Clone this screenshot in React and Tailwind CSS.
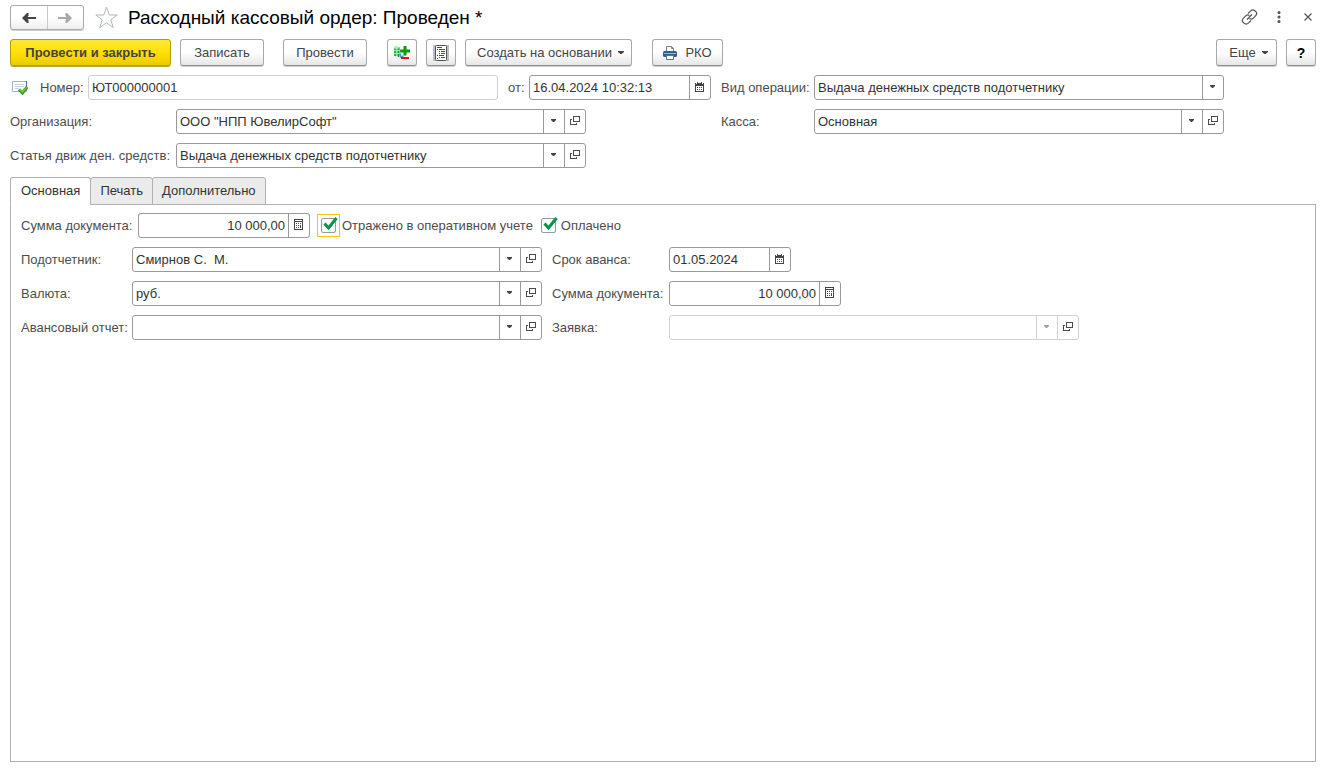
import { useState } from 'react';
import clsx from 'clsx';

const BUTTON = 'h-[27px] shrink-0 flex items-center justify-center rounded-[3px] border border-[#a9a9a9] border-b-[#8f8f8f] bg-linear-to-b from-white from-50% to-[#e6e6e6] shadow-[0_1px_0_#d0d0d0] text-[#444444] whitespace-nowrap';

const TABS = ['Основная', 'Печать', 'Дополнительно'];

function Caret({ wide }) {
  return (
    <svg className="shrink-0" width={wide ? 6 : 5} height="3" viewBox="0 0 5 3" preserveAspectRatio="none" fill="currentColor">
      <path d="M0 0h5v1L3 3H2L0 1z" />
    </svg>
  );
}

function OpenIcon() {
  return (
    <svg width="10" height="9" viewBox="0 0 10 9" fill="#4a4a4a" shapeRendering="crispEdges">
      <path fillRule="evenodd" d="M3 0h7v6H3zM4 1v4h5V1z" />
      <path d="M0 3h2v1H1v4h5V7h1v2H0z" />
    </svg>
  );
}

function CalendarIcon() {
  return (
    <svg width="9" height="10" viewBox="0 0 9 10" fill="#444444" shapeRendering="crispEdges">
      <path d="M0 1h9v3H0zM2 0h1v1H2zM6 0h1v1H6zM0 4h1v6H0zM8 4h1v6H8zM1 9h7v1H1zM2 5h1v1H2zM4 5h1v1H4zM6 5h1v1H6zM2 7h1v1H2zM4 7h1v1H4zM6 7h1v1H6z" />
      <path d="M1 1h1v1H1zM7 1h1v1H7z" fill="#ffffff" />
    </svg>
  );
}

function CalculatorIcon() {
  return (
    <svg width="9" height="11" viewBox="0 0 9 11" fill="#444444" shapeRendering="crispEdges">
      <path d="M0 0h9v1H0zM0 2h9v1H0zM0 1h1v10H0zM8 1h1v10H8zM1 10h7v1H1zM2 4h1v1H2zM4 4h1v1H4zM6 4h1v1H6zM2 6h1v1H2zM4 6h1v1H4zM6 6h1v3H6zM2 8h1v1H2zM4 8h1v1H4z" />
    </svg>
  );
}

function ArrowIcon({ flip }) {
  return (
    <svg className={flip ? 'rotate-180' : ''} width="14" height="10" viewBox="0 0 14 10" fill="currentColor">
      <path d="M0 5L5 0h1.500v3L5.500 4H14v2H5.500l1 1v3H5z" />
    </svg>
  );
}

function MovementsIcon() {
  return (
    <svg width="16" height="16" viewBox="0 0 16 16">
      <path d="M0 2.500h6v8.500H0z" fill="#7be08c" />
      <path d="M1 3v8M4.500 2v10" stroke="#17a03a" strokeWidth="1.500" />
      <ellipse cx="2.500" cy="2.500" rx="2.500" ry="1.500" fill="#a5efb0" />
      <path d="M0 5.500h6M0 8.500h6" stroke="#c9f5cf" strokeWidth=".7" />
      <path d="M6.500 8.500v3.500l3-1" fill="none" stroke="#4a93d0" strokeWidth="1.500" />
      <path d="M6 6h10M11 1v9.500" stroke="#0a9a0a" strokeWidth="3" />
      <path d="M7 13h8" stroke="#ee1111" strokeWidth="2" />
    </svg>
  );
}

function ReportIcon() {
  return (
    <svg width="16" height="16" viewBox="0 0 16 16">
      <path d="M0 0h16v16H0z" fill="#bdbdbd" />
      <rect x="2.500" y=".5" width="11" height="15" rx="1" fill="#fff" stroke="#555555" />
      <path d="M4 2h5v1H4zM6 4h6v1H6zM8 6h4v1H8zM8 8h4v1H8zM6 10h5v1H6zM8 12h4v1H8zM4 4h1v1H4zM6 6h1v1H6zM6 8h1v1H6zM4 10h1v1H4zM6 12h1v1H6zM4 13h1v1H4z" fill="#165a80" />
    </svg>
  );
}

function PrinterIcon() {
  return (
    <svg width="14" height="14" viewBox="0 0 14 14">
      <path d="M3.500 5V.5h5l2 2V5" fill="#fff" stroke="#6c8499" />
      <path d="M8.500 .5v2h2" fill="none" stroke="#6c8499" />
      <rect y="5" width="14" height="6" rx="1.500" fill="#2f618c" />
      <path d="M1 7.500h12" stroke="#9dbad2" />
      <path d="M3.500 9.500h7v4h-7z" fill="#fff" stroke="#56738c" />
    </svg>
  );
}

function PostedIcon() {
  return (
    <svg width="16" height="14" viewBox="0 0 16 14">
      <path d="M.5 .5h14v10H.5z" fill="#fff" stroke="#9fb4c6" />
      <path d="M14.500 0v7" stroke="#45698a" />
      <path d="M3 3.500h9M3 5.500h9M3 7.500h4" stroke="#c6d1db" />
      <path d="M7 8.500l3.500 3.500L15 6" fill="none" stroke="#2c8f1d" strokeWidth="3" />
      <path d="M7.500 8.500l3 2.800L14.500 6" fill="none" stroke="#62cc3c" strokeWidth="1.500" />
    </svg>
  );
}

function Frame({ muted, className, children }) {
  return (
    <div className={clsx('flex h-[25px] shrink-0 overflow-hidden rounded-[3px] border bg-white', muted ? 'border-[#d0d0d0]' : 'border-[#999999]', className)}>
      {children}
    </div>
  );
}

function IconButton({ label, muted, children }) {
  return (
    <button type="button" aria-label={label} className={clsx('flex w-[21px] shrink-0 items-center justify-center border-l pr-px pb-0.5', muted ? 'border-[#d0d0d0]' : 'border-[#999999]')}>
      {children}
    </button>
  );
}

function TextField({ id, value, className, right, muted, icon, iconLabel }) {
  return (
    <Frame muted={muted} className={className}>
      <input id={id} defaultValue={value} readOnly={muted} className={clsx('min-w-0 flex-1 px-[3px] text-[#333333] outline-none', right && 'text-right')} />
      {icon && <IconButton label={iconLabel}>{icon}</IconButton>}
    </Frame>
  );
}

function SelectField({ id, value, muted, open = true }) {
  return (
    <Frame muted={muted} className="w-[410px]">
      <div className="relative min-w-0 flex-1">
        <select id={id} defaultValue={value} disabled={muted} className="h-full w-full appearance-none bg-transparent pr-6 pl-[3px] whitespace-pre text-[#333333] outline-none">
          <option value={value}>{value}</option>
        </select>
        <span className={clsx('pointer-events-none absolute inset-y-0 right-0 flex w-[21px] items-center justify-center border-l pr-px pb-0.5', muted ? 'border-[#d0d0d0] text-[#a0a0a0]' : 'border-[#999999] text-[#444444]')}>
          <Caret />
        </span>
      </div>
      {open && <IconButton label="Открыть" muted={muted}><OpenIcon /></IconButton>}
    </Frame>
  );
}

function Label({ htmlFor, className, children }) {
  return (
    <label htmlFor={htmlFor} className={clsx('shrink-0 whitespace-nowrap', className)}>{children}</label>
  );
}

function CheckField({ id, focused, children }) {
  return (
    <div className={clsx('flex items-center', focused ? 'gap-0.5' : 'gap-[5px]')}>
      <span className={clsx('relative flex', focused && 'border border-[#f5c518] p-[3px]')}>
        <input id={id} type="checkbox" defaultChecked className="peer size-[15px] appearance-none rounded-[2px] border border-[#999999] bg-white outline-none" />
        <svg className={clsx('pointer-events-none absolute hidden peer-checked:block', focused ? 'top-0.5 left-[5px]' : '-top-px left-0.5')} width="15" height="14" viewBox="0 0 15 14" fill="none" stroke="#009646" strokeWidth="3">
          <path d="M1.500 6.500l4 4.500L13.500 1" />
        </svg>
      </span>
      <label htmlFor={id} className="whitespace-nowrap">{children}</label>
    </div>
  );
}

export default function App() {
  const [tab, setTab] = useState('Основная');

  return (
    <div className="flex min-h-screen flex-col bg-white px-2.5 pt-[5px] pb-1.5 font-['Liberation_Sans',Arial,sans-serif] text-[13px] leading-4 text-[#4d4d4d]">
      {/* Window title */}
      <header className="flex h-[25px] items-center">
        <div className="flex h-[25px] w-[74px] rounded-[3px] border border-[#a9a9a9] bg-linear-to-b from-white from-50% to-[#eeeeee] shadow-[0_1px_0_#d0d0d0]">
          <button type="button" aria-label="Назад" className="flex flex-1 items-center justify-center text-[#444444]"><ArrowIcon /></button>
          <button type="button" aria-label="Вперед" className="flex flex-1 items-center justify-center border-l border-[#c8c8c8] text-[#a8a8a8]"><ArrowIcon flip /></button>
        </div>
        <button type="button" aria-label="В избранное" className="ml-2.5">
          <svg width="24" height="23" viewBox="0 0 24 23" fill="none" stroke="#b0b6bd">
            <path d="M12.500 1l2.700 8h8l-6.400 4.800 2.400 7.700-6.700-4.700-6.700 4.700 2.400-7.700L1.800 9h8z" />
          </svg>
        </button>
        <h1 className="ml-2.5 text-[19px] leading-6 whitespace-nowrap text-black">Расходный кассовый ордер: Проведен *</h1>
        <div className="ml-auto flex items-center gap-[19px] pr-1 pb-0.5 text-[#555555]">
          <button type="button" aria-label="Получить ссылку">
            <svg width="17" height="16" viewBox="0 0 16 16" fill="none" stroke="currentColor" strokeWidth="1.200">
              <path d="M6.500 4.500l2.700-2.700a3 3 0 0 1 4.300 0l.7.7a3 3 0 0 1 0 4.200l-2.400 2.400a3 3 0 0 1-3.800.4M9.500 11.500l-2.700 2.700a3 3 0 0 1-4.300 0l-.7-.7a3 3 0 0 1 0-4.200l2.400-2.400a3 3 0 0 1 3.800-.4M5.500 10.500l5-5" />
            </svg>
          </button>
          <button type="button" aria-label="Меню">
            <svg width="4" height="12" viewBox="0 0 4 12" fill="currentColor">
              <circle cx="2" cy="1.600" r="1.500" /><circle cx="2" cy="6" r="1.500" /><circle cx="2" cy="10.400" r="1.500" />
            </svg>
          </button>
          <button type="button" aria-label="Закрыть" className="ml-1">
            <svg width="8" height="8" viewBox="0 0 8 8" stroke="currentColor" strokeWidth="1.200"><path d="M.5 .5l7 7M7.500 .5l-7 7" /></svg>
          </button>
        </div>
      </header>

      {/* Command bar */}
      <div className="mt-[9px] flex items-center">
        <button type="button" className="flex h-[27px] w-[161px] shrink-0 items-center justify-center rounded-[3px] border border-[#b39b00] bg-linear-to-b from-[#ffe82e] via-[#ffe000] to-[#edcb00] font-bold whitespace-nowrap text-[#444444] shadow-[0_1px_0_#b8a742]">Провести и закрыть</button>
        <button type="button" className={`${BUTTON} ml-[9px] w-[84px]`}>Записать</button>
        <button type="button" className={`${BUTTON} ml-[19px] w-[84px]`}>Провести</button>
        <button type="button" aria-label="Движения документа" className={`${BUTTON} ml-5 w-[30px]`}><MovementsIcon /></button>
        <button type="button" aria-label="Отчет" className={`${BUTTON} ml-[9px] w-[30px]`}><ReportIcon /></button>
        <button type="button" className={`${BUTTON} ml-[9px] w-[167px] gap-1.5 pl-1`}>Создать на основании<Caret wide /></button>
        <button type="button" className={`${BUTTON} ml-5 w-[71px] gap-2`}><PrinterIcon />РКО</button>
        <button type="button" className={`${BUTTON} ml-auto w-[61px] gap-1.5 pl-1`}>Еще<Caret wide /></button>
        <button type="button" aria-label="Справка" className={`${BUTTON} ml-[9px] w-[30px] text-sm font-bold text-black`}>?</button>
      </div>

      {/* Document header */}
      <div className="mt-[9px] flex flex-col gap-[9px]">
        <div className="flex items-center">
          <div className="flex w-[78px] shrink-0 items-center gap-3 pl-0.5">
            <PostedIcon />
            <Label htmlFor="number">Номер:</Label>
          </div>
          <TextField id="number" value="ЮТ000000001" muted className="w-[410px]" />
          <Label htmlFor="date" className="ml-2.5 w-[21px]">от:</Label>
          <TextField id="date" value="16.04.2024 10:32:13" className="w-[182px]" icon={<CalendarIcon />} iconLabel="Выбрать дату" />
          <Label htmlFor="operation" className="ml-2.5 w-[93px]">Вид операции:</Label>
          <SelectField id="operation" value="Выдача денежных средств подотчетнику" open={false} />
        </div>
        <div className="flex items-center">
          <Label htmlFor="company" className="w-[166px]">Организация:</Label>
          <SelectField id="company" value={'ООО "НПП ЮвелирСофт"'} />
          <Label htmlFor="cashbox" className="ml-[135px] w-[93px]">Касса:</Label>
          <SelectField id="cashbox" value="Основная" />
        </div>
        <div className="flex items-center">
          <Label htmlFor="article" className="w-[166px]">Статья движ ден. средств:</Label>
          <SelectField id="article" value="Выдача денежных средств подотчетнику" />
        </div>
      </div>

      {/* Tabs */}
      <div role="tablist" className="z-10 mt-[9px] -mb-px flex">
        {TABS.map((name, i) => (
          <button
            key={name}
            type="button"
            role="tab"
            aria-selected={tab === name}
            onClick={() => setTab(name)}
            className={clsx('h-7 rounded-t-[3px] border border-[#b0b0b0] text-[#333333]', i === 0 ? 'px-2.5' : '-ml-px px-[9px]', tab === name ? 'border-b-white bg-white' : 'bg-[#ebebeb]')}
          >
            {name}
          </button>
        ))}
      </div>
      <main role="tabpanel" className="flex flex-1 flex-col gap-[9px] border border-[#b0b0b0] px-2.5 pt-2">
        {tab === 'Основная' && (
          <>
            <div className="flex h-[25px] items-center">
              <Label htmlFor="sum" className="w-[117px]">Сумма документа:</Label>
              <TextField id="sum" value="10 000,00" right className="mr-[7px] w-[172px]" icon={<CalculatorIcon />} iconLabel="Калькулятор" />
              <CheckField id="accounted" focused>Отражено в оперативном учете</CheckField>
              <div className="ml-2">
                <CheckField id="paid">Оплачено</CheckField>
              </div>
            </div>
            <div className="flex items-center">
              <Label htmlFor="person" className="w-[111px]">Подотчетник:</Label>
              <SelectField id="person" value={'Смирнов С.\u00a0 М.'} />
              <Label htmlFor="due" className="ml-2.5 w-[117px]">Срок аванса:</Label>
              <TextField id="due" value="01.05.2024" className="w-[122px]" icon={<CalendarIcon />} iconLabel="Выбрать дату" />
            </div>
            <div className="flex items-center">
              <Label htmlFor="currency" className="w-[111px]">Валюта:</Label>
              <SelectField id="currency" value="руб." />
              <Label htmlFor="docSum" className="ml-2.5 w-[117px]">Сумма документа:</Label>
              <TextField id="docSum" value="10 000,00" right className="w-[172px]" icon={<CalculatorIcon />} iconLabel="Калькулятор" />
            </div>
            <div className="flex items-center">
              <Label htmlFor="report" className="w-[111px]">Авансовый отчет:</Label>
              <SelectField id="report" value="" />
              <Label htmlFor="request" className="ml-2.5 w-[117px]">Заявка:</Label>
              <SelectField id="request" value="" muted />
            </div>
          </>
        )}
      </main>
    </div>
  );
}
